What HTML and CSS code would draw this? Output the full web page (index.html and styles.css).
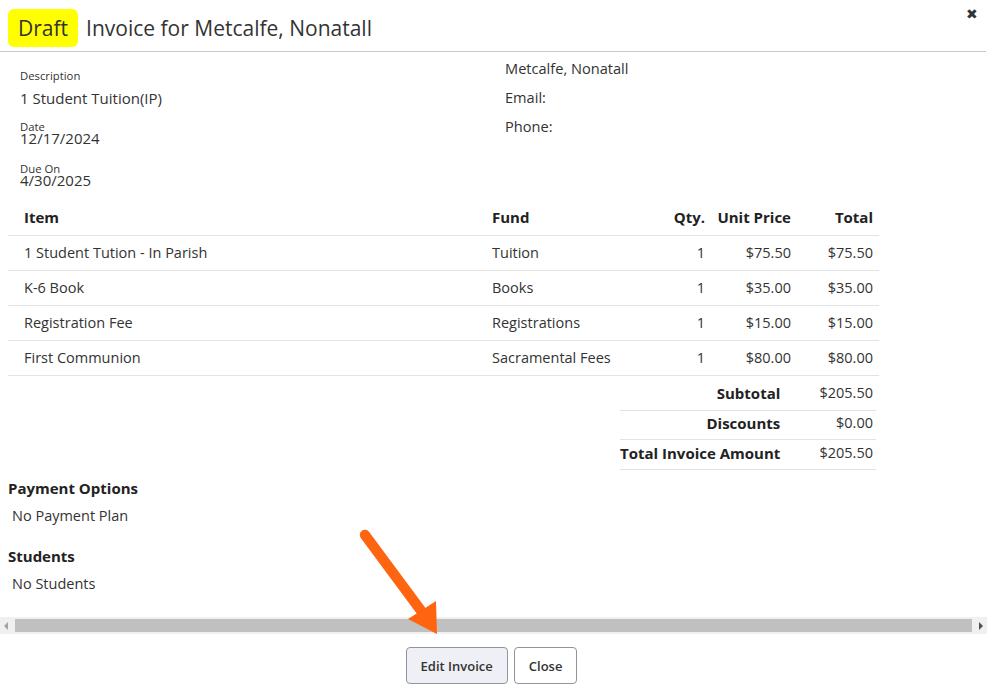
FILE: index.html
```html
<!DOCTYPE html>
<html>
<head>
<meta charset="utf-8">
<link rel="stylesheet" href="styles.css">
</head>
<body>
<div class="modal">
  <header class="modal-header">
    <span class="badge">Draft</span>
    <h1 class="title">Invoice for Metcalfe, Nonatall</h1>
    <span class="close-x">&#10006;</span>
  </header>
  <section class="modal-body">
    <div class="info">
      <div class="info-left">
        <div class="field first">
          <div class="label">Description</div>
          <div class="value">1 Student Tuition(IP)</div>
        </div>
        <div class="field date">
          <div class="label">Date</div>
          <div class="value">12/17/2024</div>
        </div>
        <div class="field due">
          <div class="label">Due On</div>
          <div class="value">4/30/2025</div>
        </div>
      </div>
      <div class="info-right">
        <div class="contact">Metcalfe, Nonatall</div>
        <div class="contact">Email:</div>
        <div class="contact">Phone:</div>
      </div>
    </div>

    <div class="lines">
      <table class="items">
        <colgroup>
          <col class="w-item"><col class="w-fund"><col class="w-qty"><col class="w-unit"><col class="w-total">
        </colgroup>
        <thead>
          <tr>
            <th class="c-item">Item</th>
            <th>Fund</th>
            <th class="num">Qty.</th>
            <th class="num">Unit Price</th>
            <th class="num">Total</th>
          </tr>
        </thead>
        <tbody>
          <tr><td class="c-item">1 Student Tution - In Parish</td><td>Tuition</td><td class="num">1</td><td class="num">$75.50</td><td class="num">$75.50</td></tr>
          <tr><td class="c-item">K-6 Book</td><td>Books</td><td class="num">1</td><td class="num">$35.00</td><td class="num">$35.00</td></tr>
          <tr><td class="c-item">Registration Fee</td><td>Registrations</td><td class="num">1</td><td class="num">$15.00</td><td class="num">$15.00</td></tr>
          <tr><td class="c-item">First Communion</td><td>Sacramental Fees</td><td class="num">1</td><td class="num">$80.00</td><td class="num">$80.00</td></tr>
        </tbody>
      </table>

      <div class="totals-wrap">
        <table class="totals">
          <tr class="t-first"><th>Subtotal</th><td>$205.50</td></tr>
          <tr class="t-mid"><th>Discounts</th><td>$0.00</td></tr>
          <tr class="t-last"><th>Total Invoice Amount</th><td>$205.50</td></tr>
        </table>
      </div>
    </div>

    <h2 class="section-title">Payment Options</h2>
    <p class="section-text">No Payment Plan</p>
    <h2 class="section-title second">Students</h2>
    <p class="section-text">No Students</p>
  </section>

  <div class="hscroll">
    <span class="arrow-l"></span>
    <span class="thumb"></span>
    <span class="arrow-r"></span>
  </div>

  <footer class="modal-footer">
    <button class="btn btn-primary">Edit Invoice</button>
    <button class="btn">Close</button>
  </footer>

  <svg class="pointer" width="110" height="120" viewBox="0 0 110 120">
    <line x1="9" y1="13" x2="66" y2="90" stroke="#ff6410" stroke-width="10.5" stroke-linecap="round"/>
    <polygon points="52,97 80,79 81,112" fill="#ff6410"/>
  </svg>
</div>
</body>
</html>
```

FILE: styles.css
```css
* { box-sizing: border-box; }
html, body { margin: 0; padding: 0; background: #fff; }
body {
  font-family: "Open Sans", "Liberation Sans", sans-serif;
  color: #333;
  width: 987px;
  height: 692px;
  overflow: hidden;
}
.modal { position: relative; width: 987px; height: 692px; }

/* header */
.modal-header {
  display: flex;
  align-items: center;
  height: 52px;
  padding: 5px 8px 0;
  border-bottom: 1px solid #c8c8c8;
  margin-right: 1px;
}
.badge {
  background: #ffff00;
  color: #333;
  font-size: 21px;
  line-height: 38px;
  height: 38px;
  padding: 0 10px;
  border-radius: 6px;
}
.title {
  font-size: 21px;
  font-weight: 400;
  margin: 0 0 0 8px;
  color: #333;
}
.close-x {
  position: absolute;
  right: 9px;
  top: 5px;
  font-size: 14px;
  line-height: 18px;
  color: #333;
}

/* body */
.modal-body { padding: 0 8px; }
.info { display: flex; }
.info-left { width: 497px; padding: 16px 0 0 12px; }
.info-right { flex: 1; padding-top: 2px; }
.label { font-size: 11.3px; color: #333; }
.value { font-size: 15px; color: #333; }
.first .label { line-height: 16px; }
.first .value { line-height: 20px; margin-top: 4px; }
.date { margin-top: 14px; }
.due { margin-top: 19px; }
.date .label, .due .label { line-height: 10px; }
.date .value, .due .value { line-height: 14px; margin-top: -1px; }
.contact { font-size: 14.6px; line-height: 29px; }

.lines { width: 871px; margin-top: 13px; }
.items {
  width: 871px;
  table-layout: fixed;
  border-collapse: collapse;
  font-size: 14.5px;
}
.w-item { width: 478px; }
.w-fund { width: 164px; }
.w-qty { width: 61px; }
.w-unit { width: 86px; }
.w-total { width: 82px; }
.items th, .items td {
  text-align: left;
  padding: 0 6px;
  height: 35px;
  border-bottom: 1px solid #e3e3e3;
  white-space: nowrap;
}
.items th { font-weight: 700; color: #222; font-size: 15px; }
.items .c-item { padding-left: 16px; }
.items .num { text-align: right; }

.totals-wrap { display: flex; justify-content: flex-end; padding-right: 3px; }
.totals { border-collapse: collapse; font-size: 14.5px; width: 256px; }
.totals th, .totals td {
  height: 29px;
  border-bottom: 1px solid #e3e3e3;
  text-align: right;
  padding: 0 3px 0 0;
  white-space: nowrap;
}
.totals th { font-weight: 700; font-size: 15px; color: #222; padding-right: 8px; width: 168px; }
.totals .t-first th, .totals .t-first td { height: 35px; }
.totals .t-mid th, .totals .t-mid td { padding-bottom: 5px; }
.totals .t-last th, .totals .t-last td { height: 30px; padding-bottom: 4px; }

.section-title {
  font-size: 15px;
  font-weight: 700;
  margin: 9px 0 0;
  line-height: 18px;
  color: #222;
}
.section-title.second { margin-top: 22px; }
.section-text {
  font-size: 14.5px;
  margin: 10px 0 0 4px;
  line-height: 18px;
}

/* fake horizontal scrollbar */
.hscroll {
  position: absolute;
  left: 0; right: 0; top: 617px;
  height: 17px;
  background: #f0f0f0;
  display: flex;
  align-items: center;
}
.hscroll .thumb {
  flex: 1;
  height: 13px;
  background: #c0c0c0;
  margin: 0 3px;
}
.arrow-l, .arrow-r { width: 12px; display: flex; justify-content: center; }
.arrow-l::before {
  content: ""; border-right: 4px solid #a3a3a3; border-top: 4px solid transparent; border-bottom: 4px solid transparent;
}
.arrow-r::before {
  content: ""; border-left: 4px solid #505050; border-top: 4px solid transparent; border-bottom: 4px solid transparent;
}

/* footer */
.modal-footer {
  position: absolute;
  left: 0; right: 0; top: 647px;
  display: flex;
  justify-content: center;
  gap: 6px;
  padding-right: 4px;
}
.btn {
  font-family: inherit;
  font-size: 13px;
  font-weight: 600;
  color: #333;
  background: #fff;
  border: 1px solid #8f949e;
  border-radius: 4px;
  height: 37px;
  padding: 0 14px;
}
.btn-primary { background: #eef0f5; }

.pointer { position: absolute; left: 356px; top: 522px; }
```
